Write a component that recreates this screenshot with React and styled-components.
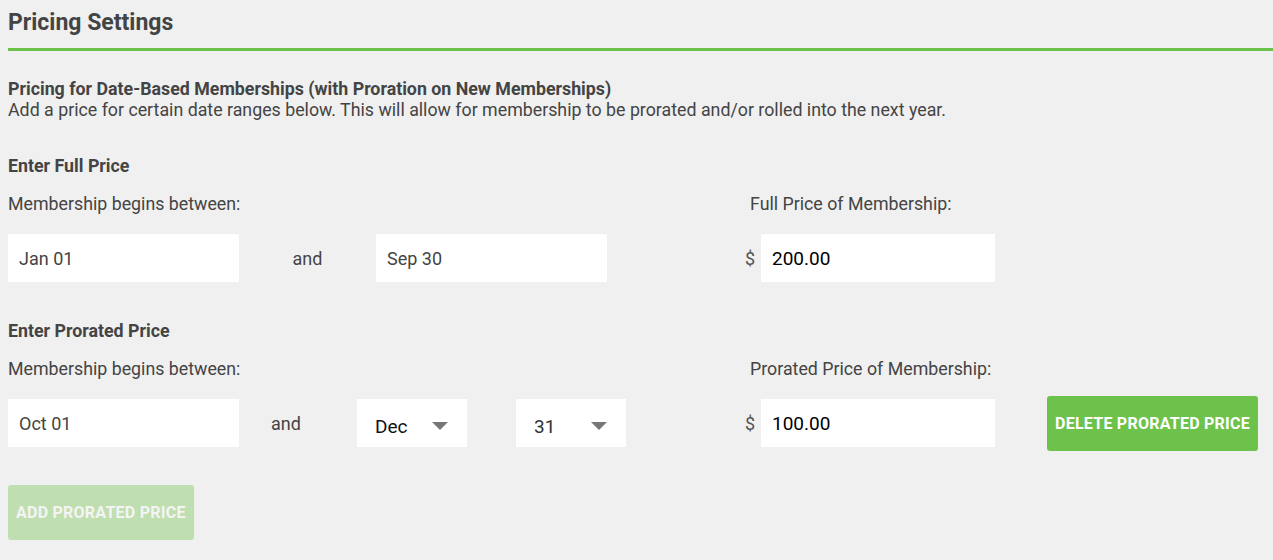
import styled, { createGlobalStyle } from 'styled-components'

const GlobalStyle = createGlobalStyle`
  body {
    margin: 0;
    background: #f0f0f0;
  }
`

const Page = styled.div`
  padding: 0 0 0 8px;
  font-family: Roboto, "Liberation Sans", sans-serif;
  color: #444;
`

const Header = styled.h2`
  margin: 0;
  padding: 11px 0 13px;
  font-size: 23px;
  line-height: 24px;
  font-weight: 700;
  border-bottom: 3px solid #6cc24a;
`

const Intro = styled.div`
  margin-top: 27px;
  font-size: 17.8px;
  line-height: 21px;
`

const IntroTitle = styled.div`
  font-weight: 700;
`

const Block = styled.div`
  margin-top: ${({ $top }) => $top}px;
`

const BlockTitle = styled.div`
  font-size: 17.8px;
  line-height: 24px;
  font-weight: 700;
`

const LabelRow = styled.div`
  display: flex;
  margin-top: 14px;
  font-size: 17.8px;
  line-height: 24px;
`

const FieldRow = styled.div`
  display: flex;
  align-items: center;
  height: 48px;
  margin-top: 18px;
`

const LeftCol = styled.div`
  display: flex;
  align-items: center;
  width: 737px;
  flex: none;
`

const PriceLabel = styled.div`
  padding-left: 5px;
`

const TextInput = styled.input`
  box-sizing: border-box;
  width: ${({ $w }) => $w}px;
  height: 48px;
  padding: 0 11px;
  border: none;
  outline: none;
  background: #fff;
  font-family: inherit;
  font-size: ${({ $size }) => $size || 18}px;
  color: ${({ $color }) => $color || '#444'};
`

const And = styled.div`
  box-sizing: border-box;
  width: ${({ $w }) => $w}px;
  padding-left: ${({ $pl }) => $pl || 0}px;
  text-align: ${({ $pl }) => ($pl ? 'left' : 'center')};
  font-size: 18px;
`

const SelectBox = styled.div`
  box-sizing: border-box;
  display: flex;
  align-items: center;
  justify-content: space-between;
  width: 110px;
  height: 48px;
  margin-right: ${({ $mr }) => $mr || 0}px;
  padding: 6px 19px 0 18px;
  background: #fff;
  font-size: 19px;
  color: ${({ $color }) => $color};
`

const Dollar = styled.span`
  width: 16px;
  font-size: 18px;
  color: #555;
`

const PriceGroup = styled.div`
  display: flex;
  align-items: center;
`

const Button = styled.button`
  height: 55px;
  padding: 0 8px;
  border: none;
  border-radius: 3px;
  background: ${({ $disabled }) => ($disabled ? '#bfdfb0' : '#6cc24a')};
  color: ${({ $disabled }) => ($disabled ? '#f4f4f4' : '#fff')};
  font-family: inherit;
  font-size: 16px;
  font-weight: 700;
  letter-spacing: 0.25px;
  text-transform: uppercase;
`

const DeleteButton = styled(Button)`
  margin: -3px 0 -4px 52px;
`

const AddButton = styled(Button)`
  display: block;
  margin-top: 38px;
`

function Select({ value, color, mr }) {
  return (
    <SelectBox $color={color} $mr={mr}>
      <span>{value}</span>
      <svg width="16" height="8" viewBox="0 0 16 8">
        <path d="M0 0h16L8 8z" fill="#777" />
      </svg>
    </SelectBox>
  )
}

export default function App() {
  return (
    <>
      <GlobalStyle />
      <Page>
        <Header>Pricing Settings</Header>
        <Intro>
          <IntroTitle>Pricing for Date-Based Memberships (with Proration on New Memberships)</IntroTitle>
          Add a price for certain date ranges below. This will allow for membership to be prorated and/or rolled into the next year.
        </Intro>

        <Block $top={34}>
          <BlockTitle>Enter Full Price</BlockTitle>
          <LabelRow>
            <LeftCol>Membership begins between:</LeftCol>
            <PriceLabel>Full Price of Membership:</PriceLabel>
          </LabelRow>
          <FieldRow>
            <LeftCol>
              <TextInput $w={231} readOnly value="Jan 01" />
              <And $w={137}>and</And>
              <TextInput $w={231} readOnly value="Sep 30" />
            </LeftCol>
            <PriceGroup>
              <Dollar>$</Dollar>
              <TextInput $w={234} $size={19} $color="#000" readOnly value="200.00" />
            </PriceGroup>
          </FieldRow>
        </Block>

        <Block $top={37}>
          <BlockTitle>Enter Prorated Price</BlockTitle>
          <LabelRow>
            <LeftCol>Membership begins between:</LeftCol>
            <PriceLabel>Prorated Price of Membership:</PriceLabel>
          </LabelRow>
          <FieldRow>
            <LeftCol>
              <TextInput $w={231} readOnly value="Oct 01" />
              <And $w={118} $pl={32}>and</And>
              <Select value="Dec" color="#111" mr={49} />
              <Select value="31" color="#333" />
            </LeftCol>
            <PriceGroup>
              <Dollar>$</Dollar>
              <TextInput $w={234} $size={19} $color="#000" readOnly value="100.00" />
            </PriceGroup>
            <DeleteButton>Delete Prorated Price</DeleteButton>
          </FieldRow>
        </Block>

        <AddButton $disabled>Add Prorated Price</AddButton>
      </Page>
    </>
  )
}
